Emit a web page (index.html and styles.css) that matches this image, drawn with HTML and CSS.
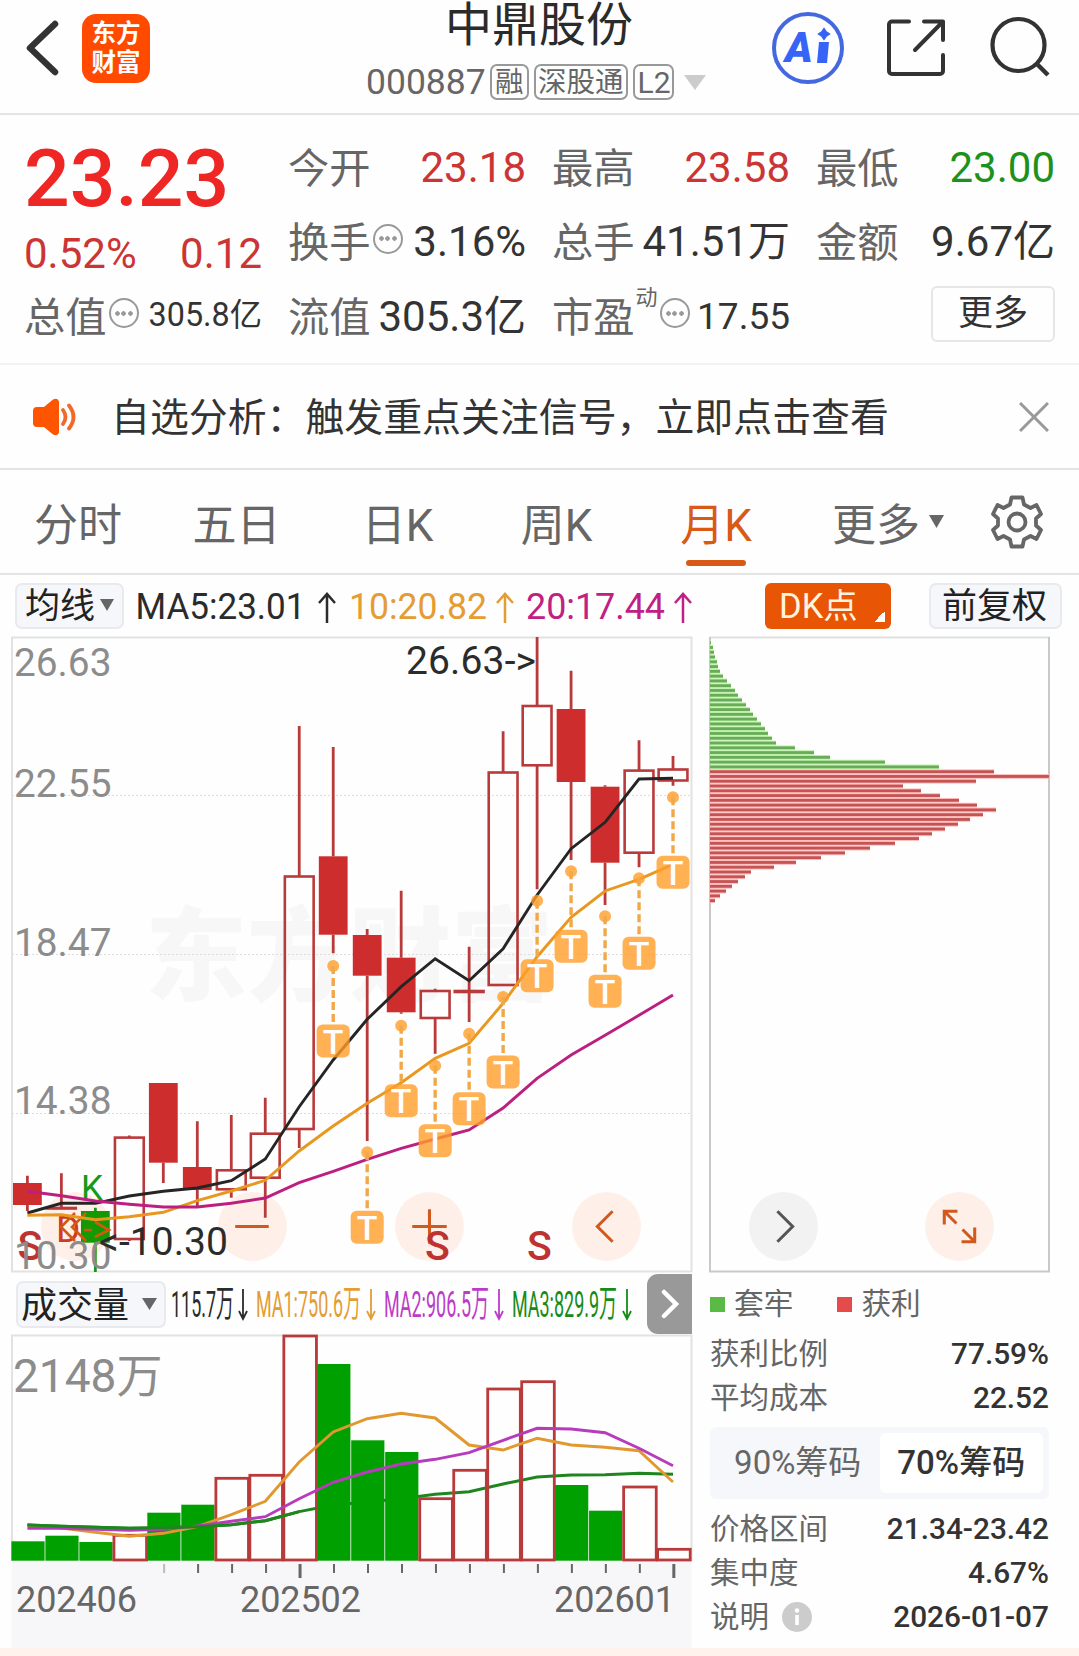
FILE: index.html
```html
<!DOCTYPE html>
<html lang="zh-CN">
<head>
    <meta charset="utf-8">
    <title>中鼎股份 000887</title>
    <link rel="stylesheet" href="styles.css">
</head>
<body>
    <header class="topbar">
        <svg class="back" width="36" height="58" viewBox="0 0 36 58"><path d="M31 5 L6 29 L31 53" fill="none" stroke="#333" stroke-width="6.5" stroke-linecap="round" stroke-linejoin="round"/></svg>
        <div class="logo"><span>东方</span><span>财富</span></div>
        <div class="title">
            <h1>中鼎股份</h1>
            <div class="code">
                <span class="num">000887</span>
                <span class="tag">融</span>
                <span class="tag">深股通</span>
                <span class="tag">L2</span>
                <svg class="down" width="22" height="15" viewBox="0 0 22 15"><path d="M0 0H22L11 15Z" fill="#ccc"/></svg>
            </div>
        </div>
        <svg class="tools" width="300" height="80" viewBox="760 8 300 80" fill="none">
            <circle cx="808" cy="48" r="34" stroke="#4468e0" stroke-width="4"/>
            <text x="785" y="62" class="ai-text">A</text>
            <path d="M819 42h10l-2 21h-10z" fill="#3564f6"/>
            <path d="M824 29l2 3 3 2-3 2-2 3-2-3-3-2 3-2z" fill="#3564f6" stroke="#3564f6" stroke-width="2"/>
            <path d="M909 21.500H892a3 3 0 0 0-3 3V71a3 3 0 0 0 3 3h48a3 3 0 0 0 3-3V55M924 21.500h19V40M943 21.500L915 50" stroke="#333" stroke-width="4" stroke-linecap="round" stroke-linejoin="round"/>
            <circle cx="1018.500" cy="45" r="26" stroke="#333" stroke-width="4.200"/>
            <path d="M1037 64L1048 75" stroke="#333" stroke-width="4.500"/>
        </svg>
    </header>

    <section class="quote">
        <div class="col col-price">
            <div class="price">23.23</div>
            <div class="change"><span>0.52%</span><span>0.12</span></div>
            <div class="item"><label>总值</label><i class="more-dot"></i><b class="sm">305.8亿</b></div>
        </div>
        <div class="col">
            <div class="item"><label>今开</label><b class="up">23.18</b></div>
            <div class="item"><label>换手</label><i class="more-dot"></i><b>3.16%</b></div>
            <div class="item"><label>流值</label><b>305.3亿</b></div>
        </div>
        <div class="col">
            <div class="item"><label>最高</label><b class="up">23.58</b></div>
            <div class="item"><label>总手</label><b>41.51万</b></div>
            <div class="item"><label>市盈</label><sup>动</sup><i class="more-dot"></i><b class="md">17.55</b></div>
        </div>
        <div class="col">
            <div class="item"><label>最低</label><b class="down-color">23.00</b></div>
            <div class="item"><label>金额</label><b>9.67亿</b></div>
            <div class="item"><button class="more-btn">更多</button></div>
        </div>
    </section>

    <section class="notice">
        <svg width="46" height="38" viewBox="0 0 46 38"><path d="M1 13q0-4 4-4h7L21 1.500q5-2 6 2v31q-1 4-6 2L12 29H5q-4 0-4-4z" fill="#ff5500"/><path d="M31 12q5 7 0 14M37 7.500q9 11.500 0 23" fill="none" stroke="#f0692a" stroke-width="3.800" stroke-linecap="round"/></svg>
        <p>自选分析：触发重点关注信号，立即点击查看</p>
        <svg width="30" height="30" viewBox="0 0 30 30"><path d="M1 1L29 29M29 1L1 29" stroke="#999" stroke-width="3"/></svg>
    </section>

    <nav class="tabs">
        <a>分时</a>
        <a>五日</a>
        <a>日K</a>
        <a>周K</a>
        <a class="active">月K</a>
        <a>更多<svg width="15" height="13" viewBox="0 0 15 13"><path d="M0 0H15L7.500 13Z" fill="#666"/></svg></a>
        <a>
            <svg width="54" height="54" viewBox="-27 -27 54 54" fill="none" stroke="#666" stroke-width="3.800">
                <path d="M-5.500 -24.500H5.500L7 -17.500L13.500 -14L19.500 -17L24 -8L19 -3.500V3.500L24 8L19.500 17L13.500 14L7 17.500L5.500 24.500H-5.500L-7 17.500L-13.500 14L-19.500 17L-24 8L-19 3.500V-3.500L-24 -8L-19.500 -17L-13.500 -14L-7 -17.500Z" stroke-linejoin="round"/>
                <circle r="8.500"/>
            </svg>
        </a>
    </nav>

    <div class="ma-bar">
        <button class="pill">均线<svg width="14" height="12" viewBox="0 0 14 12"><path d="M0 0H14L7 12Z" fill="#666"/></svg></button>
        <svg class="ma-text" width="570" height="50" viewBox="130 580 570 50">
            <g fill="#2b2b2b" stroke="#2b2b2b"><text x="135.500" y="618" textLength="170" lengthAdjust="spacingAndGlyphs">MA5:23.01</text><path d="M327 622V593M319 602L327 593L335 602"/></g>
            <g fill="#e49c33" stroke="#e49c33"><text x="349" y="618" textLength="138" lengthAdjust="spacingAndGlyphs">10:20.82</text><path d="M505 622V593M497 602L505 593L513 602"/></g>
            <g fill="#bf2084" stroke="#bf2084"><text x="526" y="618" textLength="139" lengthAdjust="spacingAndGlyphs">20:17.44</text><path d="M683 622V593M675 602L683 593L691 602"/></g>
        </svg>
        <button class="dk">DK点</button>
        <button class="pill right">前复权</button>
    </div>

    <main class="charts">
        <div class="fabs">
            <span class="fab"></span>
            <span class="fab"><svg viewBox="-34 -34 68 68"><path d="M-17 0H16"/></svg></span>
            <span class="fab"><svg viewBox="-34 -34 68 68"><path d="M-17 0H17M0 -17V17"/></svg></span>
            <span class="fab"><svg viewBox="-34 -34 68 68"><path d="M6 -15L-9 0L6 15"/></svg></span>
            <span class="fab gray"><svg viewBox="-34 -34 68 68"><path d="M-6 -15L9 0L-6 15"/></svg></span>
            <span class="fab"><svg viewBox="-34 -34 68 68"><path d="M-15 -2V-15H-2M-15 -15L-3 -3M3 3L15 15M2 15H15V1"/></svg></span>
        </div>
        <div class="left">
            <svg id="kline" width="682" height="637" viewBox="11 636 682 637"></svg>
            <div class="vol-bar">
                <button class="pill">成交量<svg width="15" height="12" viewBox="0 0 15 12"><path d="M0 0H15L7.500 12Z" fill="#666"/></svg></button>
                <svg class="vol-text" width="470" height="50" viewBox="170 1280 470 50">
                    <g fill="#2b2b2b" stroke="#2b2b2b"><text x="171" y="1318" textLength="63" lengthAdjust="spacingAndGlyphs">115.7万</text><path d="M243 1290V1319M239 1312L243 1320L247 1312"/></g>
                    <g fill="#e49c33" stroke="#e49c33"><text x="256" y="1318" textLength="105" lengthAdjust="spacingAndGlyphs">MA1:750.6万</text><path d="M371 1290V1319M367 1312L371 1320L375 1312"/></g>
                    <g fill="#bb3cc9" stroke="#bb3cc9"><text x="384" y="1318" textLength="105" lengthAdjust="spacingAndGlyphs">MA2:906.5万</text><path d="M499 1290V1319M495 1312L499 1320L503 1312"/></g>
                    <g fill="#168c16" stroke="#168c16"><text x="512" y="1318" textLength="105" lengthAdjust="spacingAndGlyphs">MA3:829.9万</text><path d="M627 1290V1319M623 1312L627 1320L631 1312"/></g>
                </svg>
                <span class="next"><svg width="20" height="30" viewBox="0 0 20 30"><path d="M4 3L16 15L4 27" fill="none" stroke="#fff" stroke-width="4.500" stroke-linecap="round"/></svg></span>
            </div>
            <svg id="volume" width="682" height="314" viewBox="11 1334 682 314"></svg>
        </div>
        <aside class="chips">
            <svg id="chips" width="342" height="637" viewBox="708 636 342 637"></svg>
            <div class="legend"><i class="green"></i><span>套牢</span><i class="red"></i><span>获利</span></div>
            <div class="stat"><span>获利比例</span><b>77.59%</b></div>
            <div class="stat"><span>平均成本</span><b>22.52</b></div>
            <div class="switch"><span>90%筹码</span><span class="on">70%筹码</span></div>
            <div class="stat"><span>价格区间</span><b>21.34-23.42</b></div>
            <div class="stat"><span>集中度</span><b>4.67%</b></div>
            <div class="stat"><span>说明</span><i class="info"><svg width="30" height="30" viewBox="0 0 30 30"><circle cx="15" cy="15" r="15" fill="#ccc"/><circle cx="15" cy="8.500" r="2.300" fill="#fff"/><path d="M15 13V23" stroke="#fff" stroke-width="3.600"/></svg></i><b>2026-01-07</b></div>
        </aside>
    </main>
    <script src="script.js"></script>
</body>
</html>
```

FILE: styles.css
```css
* { padding: 0; margin: 0; box-sizing: border-box; }
body {
    width: 1079px;
    height: 1656px;
    overflow: hidden;
    background-color: #fefefe;
    border-bottom: 8px solid #fff2ed;
    font-family: Roboto, "Noto Sans CJK SC", sans-serif;
    line-height: 1.17;
    color: #333;
}
svg { display: block; flex: none; }
button { font: inherit; color: inherit; }
b { font-weight: normal; }
i { font-style: normal; }

/* header */
.topbar {
    display: flex;
    height: 115px;
    border-bottom: 2px solid #e4e4e4;
}
.back { margin: 19px 0 0 24px; }
.logo {
    width: 68px;
    height: 69px;
    margin: 14px 0 0 22px;
    padding-top: 5px;
    border-radius: 14px;
    background-color: #ff4a00;
    color: #fff;
    font-weight: 700;
    font-size: 24.500px;
    line-height: 29px;
    text-align: center;
}
.logo span { display: block; }
.title { width: 380px; margin-left: 201px; }
.title h1 {
    margin-left: 94px;
    font-size: 47px;
    font-weight: normal;
    line-height: 50px;
    white-space: nowrap;
    color: #2b2b2b;
}
.code {
    display: flex;
    align-items: center;
    margin: 14px 0 0 15px;
    color: #666;
}
.code .num { font-size: 35.500px; line-height: 36px; width: 124px; }
.tag {
    height: 36px;
    padding: 0 3px;
    margin-right: 5px;
    border: 2px solid #999;
    border-radius: 7px;
    font-size: 28.500px;
    line-height: 33px;
}
.tag + .tag { padding: 0 2.500px; }
.tag:nth-child(4) { width: 41px; font-size: 30px; text-align: center; }
.down { margin-left: 5px; }
.tools { margin: 8px 0 0 29px; }
.ai-text { font-size: 42px; font-weight: 900; font-style: italic; fill: #3564f6; }

/* quote numbers */
.quote {
    display: grid;
    grid-template-columns: 238px 238px 238px 239px;
    column-gap: 26px;
    height: 250px;
    padding: 15px 0 0 24px;
    border-bottom: 2px solid #f2f2f2;
}
.item {
    display: flex;
    align-items: center;
    height: 74.500px;
    white-space: nowrap;
}
.item label { margin-top: 3px; font-size: 41.300px; color: #666; }
.item b { margin-left: auto; font-size: 42px; color: #333; }
.item b.sm { font-size: 32.300px; }
.item b.md { font-size: 37px; }
.item b.up, .change { color: #cb3534; }
.item b.down-color { color: #1c921c; }
.item sup { font-size: 22px; color: #666; margin: -36px 0 0 1px; }
.price {
    height: 92px;
    font-size: 80.500px;
    font-weight: 500;
    line-height: 98px;
    color: #ee2624;
}
.change {
    display: flex;
    justify-content: space-between;
    height: 57px;
    font-size: 42px;
    line-height: 64px;
}
.more-dot {
    width: 30px;
    height: 30px;
    margin: -6px 0 0 2px;
    border: 2px solid #999;
    border-radius: 50%;
    background: radial-gradient(circle, #999 2px, transparent 2.500px) center / 7px 7px no-repeat,
        radial-gradient(circle, #999 2px, transparent 2.500px) 3px center / 7px 7px no-repeat,
        radial-gradient(circle, #999 2px, transparent 2.500px) 16px center / 7px 7px no-repeat;
}
.more-btn {
    width: 124px;
    height: 56px;
    margin: -4px 0 0 auto;
    border: 2px solid #e6e6e6;
    border-radius: 6px;
    background: #fefefe;
    font-size: 35px;
    line-height: 52px;
}

/* notice */
.notice {
    display: flex;
    align-items: center;
    height: 105px;
    padding: 0 30px 0 32px;
    border-bottom: 2px solid #e4e4e4;
}
.notice p { flex: 1; margin: 3px 0 0 33px; font-size: 38.900px; white-space: nowrap; }

/* period tabs */
.tabs {
    display: grid;
    grid-template-columns: 156px 161px 161px 157px 162px 182px 76px;
    height: 105px;
    border-bottom: 2px solid #e4e4e4;
    font-size: 44px;
    line-height: normal;
    color: #666;
}
.tabs a {
    display: flex;
    align-items: center;
    justify-content: center;
    position: relative;
}
.tabs a svg { margin-left: 9px; }
.tabs a:last-child svg { margin-left: 0; }
.tabs .active { color: #d85a16; }
.tabs .active::after {
    content: "";
    position: absolute;
    left: 51px;
    bottom: 7px;
    width: 60px;
    height: 6px;
    border-radius: 3px;
    background-color: #d85a16;
}

/* moving average bar */
.ma-bar {
    display: flex;
    align-items: center;
    height: 61px;
    padding-left: 15px;
}
.pill {
    display: flex;
    align-items: center;
    height: 46px;
    width: 109px;
    padding: 3px 0 0 8px;
    border: 2px solid #e8eaed;
    border-radius: 7px;
    background-color: #f6f7fa;
    font-size: 35px;
    line-height: 40px;
    color: #222;
    white-space: nowrap;
}
.pill svg { margin: -4px 0 0 5px; }
.pill.right { width: 133px; margin-left: 38px; padding-left: 11px; }
.ma-text { margin-left: 6px; font-size: 36px; }
.ma-text text, .vol-text text { stroke: none; }
.ma-text path { fill: none; stroke-width: 2.500; }
.dk {
    width: 126px;
    height: 46px;
    margin-left: 65px;
    padding-left: 14px;
    border: 0;
    border-radius: 6px;
    background: linear-gradient(135deg, transparent 50%, #fff 50%) 109px 28px / 11px 11px no-repeat #e85505;
    color: #fff3df;
    font-size: 34.500px;
    line-height: 46px;
    text-align: left;
}

/* charts */
.charts {
    position: relative;
    display: flex;
    gap: 15px;
    padding-left: 11px;
}
.left, .chips { position: relative; }
.left { width: 682px; }
.chips { width: 342px; }
.fabs {
    position: absolute;
    left: 41px;
    top: 556px;
    display: flex;
    gap: 107.900px;
}
.fab {
    width: 69px;
    height: 69px;
    border-radius: 50%;
    background-color: #fef0e9;
}
.fab svg { fill: none; stroke: #d2591d; stroke-width: 3; }
.fab.gray { background-color: #f2f2f2; }
.fab.gray svg { stroke: #555; }
.vol-bar { display: flex; height: 61px; align-items: center; padding: 1px 0 0 5px; }
.vol-bar .pill { width: 150px; height: 47px; padding-left: 3px; font-size: 36px; }
.vol-bar .pill svg { margin-left: 13px; }
.vol-text { margin-left: 4px; font-size: 37px; }
.vol-text path { fill: none; stroke-width: 1.800; }
.next {
    display: flex;
    align-items: center;
    justify-content: center;
    width: 45px;
    height: 60px;
    margin-left: 7px;
    border-radius: 11px 0 0 11px;
    background-color: #999;
}
.axis { font-size: 38.800px; fill: #8c8c8c; }
.note { font-size: 39px; fill: #2b2b2b; }
.sign { font-size: 41px; font-weight: 500; fill: #bd3331; }
.date { font-size: 36px; fill: #666; }
.watermark { font-size: 102px; font-weight: 900; fill: #f7f7f7; }
.t-mark { font-size: 34px; font-weight: 500; fill: #fff; text-anchor: middle; }

/* chip distribution */
.legend {
    display: flex;
    align-items: center;
    height: 61px;
    padding: 2px 0 0 2px;
    font-size: 29.700px;
    color: #666;
}
.legend i { width: 15px; height: 15px; margin-right: 9px; }
.legend .green { background-color: #5bb946; }
.legend .red { background-color: #e64b4b; margin-left: 44px; }
.stat {
    display: flex;
    align-items: center;
    height: 44px;
    padding: 0 1px 0 2px;
    font-size: 29.500px;
    color: #666;
}
.stat b { margin-left: auto; font-size: 29.800px; font-weight: 500; color: #333; }
.info { margin-left: 13px; }
.legend + .stat { margin-top: -2px; }
.switch {
    display: flex;
    width: 339px;
    height: 72px;
    margin: 7px 0 8px 2px;
    padding: 6px;
    border-radius: 6px;
    background-color: #f6f7fa;
    font-size: 33px;
    line-height: 60px;
    text-align: center;
    color: #666;
}
.switch span { flex: 1; border-radius: 6px; }
.switch .on { background-color: #fff; font-weight: 500; color: #333; }
```

FILE: script.js
```javascript
const STEP = 33.98;
const cx = i => 27.4 + i * STEP;

// type, high, top, bottom, low  (f = filled red, h = hollow red, g = green)
const candles = [
    ['f', 1175.7, 1183, 1205, 1211],
    ['h', 1173.3, 1208, 1208.5, 1209],
    ['g', 1207.7, 1211, 1242.7, 1272],
    ['h', 1135.5, 1137.6, 1239, 1241],
    ['f', 1083, 1083, 1162.7, 1183],
    ['f', 1121.3, 1167, 1190, 1206],
    ['h', 1115, 1170.3, 1189.3, 1197.7],
    ['h', 1097.7, 1133.7, 1177.7, 1217.7],
    ['h', 726, 876.5, 1129, 1148],
    ['f', 747, 856.3, 934.7, 953.3],
    ['f', 929, 935, 975.7, 1141],
    ['f', 890.7, 957.7, 1012.3, 1013.7],
    ['h', 988.7, 991, 1018, 1053.7],
    ['h', 946.7, 991, 992, 1022],
    ['h', 731.3, 772.5, 985, 986],
    ['h', 637, 706, 765.3, 889.3],
    ['f', 670.7, 709, 782, 860],
    ['f', 785.3, 786.7, 862.7, 905],
    ['h', 740.3, 770.6, 852.7, 867.3],
    ['h', 756, 769.5, 780.5, 785.7]
];
const ma5 = [1213, 1203.3, 1203.3, 1196, 1191.3, 1188, 1180.7, 1159, 1106.7, 1060, 1019.3, 986.7, 958.7, 980.7, 948.7, 895, 848.7, 822.3, 779, 778.3];
const ma10 = [1215.3, 1214.7, 1219.7, 1216.7, 1212.3, 1200.7, 1191, 1180.3, 1151, 1126, 1103.3, 1082.7, 1058.3, 1043.3, 1003.3, 956.7, 917.3, 891, 879.3, 864.3];
const ma20 = [1191.3, 1195.7, 1201, 1204.3, 1207, 1207, 1203.3, 1198, 1182.7, 1171.3, 1159.3, 1148.3, 1139, 1130, 1108, 1078.3, 1055, 1035.3, 1015.3, 995];
// T signals start at candle 9
const tDots = [966, 1152.3, 1025.7, 1065.7, 1033.7, 997, 900.7, 871.3, 916.3, 878.3, 797.3];

const volumes = [
    ['g', 1541.3], ['g', 1535.7], ['g', 1542], ['h', 1535.3], ['g', 1512.7],
    ['g', 1504.7], ['h', 1478.3], ['h', 1475.3], ['h', 1336], ['g', 1364],
    ['g', 1440.3], ['g', 1452], ['h', 1498.7], ['h', 1470.3], ['h', 1389],
    ['h', 1381.7], ['g', 1485], ['g', 1510.7], ['h', 1487], ['h', 1549.3]
];
const vma1 = [1525, 1528, 1532.3, 1536.3, 1533.3, 1526.7, 1514.7, 1501.3, 1462, 1432, 1418.7, 1413.3, 1418, 1445, 1450, 1438.3, 1445, 1447.3, 1450.7, 1482];
const vma2 = [1528.3, 1528.3, 1529.3, 1530.3, 1529.3, 1526, 1521.3, 1516.7, 1498.7, 1482.3, 1472, 1464, 1459.3, 1452.7, 1440.3, 1428.3, 1429, 1432.7, 1448.3, 1465.7];
const vma3 = [1525, 1526.3, 1527.3, 1528.3, 1527.7, 1526.7, 1524.7, 1520.7, 1511.7, 1505, 1502, 1498.7, 1494.3, 1491.7, 1484, 1477, 1475, 1474.7, 1473.3, 1474.3];

const trapped = [1, 3, 4, 5, 7, 8, 10, 13, 17, 21, 25, 28, 32, 36, 40, 43, 47, 51, 55, 58, 62, 66, 85, 104, 120, 175, 229];
const profit = [284, 339, 266, 193, 211, 230, 249, 267, 286, 273, 260, 248, 235, 222, 209, 185, 160, 135, 111, 86, 64, 41, 35, 28, 22, 16, 10, 5];

function line(data, color) {
    const pts = data.map((y, i) => cx(i).toFixed(1) + ',' + y).join(' ');
    return `<polyline points="${pts}" fill="none" stroke="${color}" stroke-width="2.9"/>`;
}

function drawKline() {
    let s = '<text class="watermark" x="145" y="993">东方财富</text>';
    [795.5, 954.5, 1113.5].forEach(y => {
        s += `<path d="M12 ${y}H691" stroke="#ddd" stroke-dasharray="2 2"/>`;
    });
    s += '<rect x="12" y="637.5" width="679.500" height="634" fill="none" stroke="#e2e2e2" stroke-width="2"/>';
    candles.forEach(([type, high, top, bottom, low], i) => {
        const x = cx(i);
        const color = type === 'g' ? '#149814' : '#b93a3a';
        s += `<path d="M${x} ${high}V${top}M${x} ${bottom}V${low}" stroke="${color}" stroke-width="2.8"/>`;
        if (type === 'h') {
            s += `<rect x="${x - 14.4}" y="${top}" width="28.800" height="${bottom - top}" fill="none" stroke="${color}" stroke-width="2.6"/>`;
        } else {
            s += `<rect x="${x - 14.4}" y="${top}" width="28.800" height="${bottom - top}" fill="${type === 'g' ? '#149a00' : '#ce2d2d'}"/>`;
        }
    });
    s += '<text class="axis" x="14" y="675.500">26.63</text><text class="axis" x="14" y="797">22.55</text>' +
        '<text class="axis" x="14" y="955.500">18.47</text><text class="axis" x="14" y="1113.700">14.38</text>';
    s += '<text class="sign" x="17.500" y="1260">S</text><text class="sign" x="425" y="1260">S</text><text class="sign" x="527" y="1260">S</text>';
    s += '<text class="axis" x="14" y="1268.700">10.30</text>';
    s += '<text x="56" y="1242" font-size="37" fill="#cf3a20">D</text>';
    s += '<path d="M75 1213L61 1227L75 1241M86 1213L72 1227L86 1241M84 1230H92M95 1222L109 1230L95 1237" fill="none" stroke="#cf5a12" stroke-width="2.600"/>';
    s += '<text x="81" y="1200" font-size="35" fill="#149a14">K</text>';
    s += line(ma5, '#252525') + line(ma10, '#e8981f') + line(ma20, '#bd1f80');
    s += '<text class="note" x="406" y="673.600" textLength="130">26.63-&gt;</text>';
    s += '<text class="note" x="99" y="1254.700" textLength="129">&lt;-10.30</text>';
    tDots.forEach((y, n) => {
        const x = cx(n + 9);
        s += `<g fill="#ff9d28" fill-opacity=".8"><circle cx="${x}" cy="${y}" r="6"/>` +
            `<path d="M${x} ${y}V${y + 58}" stroke="#f0a848" stroke-width="3.4" stroke-dasharray="8 4"/>` +
            `<rect x="${x - 16.5}" y="${y + 58.5}" width="33" height="33" rx="6"/></g>` +
            `<text class="t-mark" x="${x}" y="${y + 87.5}">T</text>`;
    });
    document.getElementById('kline').innerHTML = s;
}

function drawVolume() {
    let s = '<rect x="11.700" y="1561" width="680" height="87" fill="#f7f7fa"/>' +
        '<path d="M12 1561V1335.500H691.500V1561" fill="none" stroke="#e2e2e2" stroke-width="2"/>';
    s += '<text x="13" y="1391.500" font-size="46" fill="#8c8c8c">2148万</text>';
    // the slow average runs behind the green bars from 202503 on
    s += line(vma3, '#1f861f');
    volumes.forEach(([type, top], i) => {
        const x = 11.4 + i * STEP;
        s += type === 'g'
            ? `<rect x="${x}" y="${top}" width="33.200" height="${1560.7 - top}" fill="#00a000"/>`
            : `<rect x="${x + 0.6}" y="${top}" width="32.600" height="${1560 - top}" fill="none" stroke="#b93a3a" stroke-width="2.8"/>`;
    });
    s += line(vma1, '#e0982f') + line(vma2, '#b63cbc');
    const early = vma3.slice(0, 9).map((y, i) => cx(i).toFixed(1) + ',' + y).join(' ');
    s += `<polyline points="${early}" fill="none" stroke="#1f861f" stroke-width="2.9"/>`;
    for (let i = 4; i < 20; i++) {
        const big = i === 8 || i === 19;
        s += `<path d="M${cx(i) + 0.8} 1564V${big ? 1578 : 1573}" stroke="${i === 4 ? '#bbb' : '#666'}" stroke-width="${big ? 3 : 2}"/>`;
    }
    s += '<text class="date" x="16" y="1611.500" textLength="121">202406</text><text class="date" x="240" y="1611.500" textLength="121">202502</text><text class="date" x="554" y="1611.500" textLength="121">202601</text>';
    document.getElementById('volume').innerHTML = s;
}

function drawChips() {
    let s = '<path d="M709 637.500H1050" stroke="#e0e0e0" stroke-width="2"/><path d="M710 637V1271.500H1049V637" fill="none" stroke="#c9c9c9" stroke-width="2"/>';
    trapped.concat(profit).forEach((w, i) => {
        const y = 642.7 + i * 4.777;
        const green = i < trapped.length;
        s += `<rect x="710" y="${y - 2.39}" width="${w}" height="4.780" fill="${green ? '#bdf2aa' : '#ffbdbd'}"/>`;
        s += `<rect x="710" y="${y - 1.4}" width="${w}" height="2.800" fill="${green ? '#69ab58' : '#c45454'}"/>`;
    });
    document.getElementById('chips').innerHTML = s;
}

drawKline();
drawVolume();
drawChips();
```
